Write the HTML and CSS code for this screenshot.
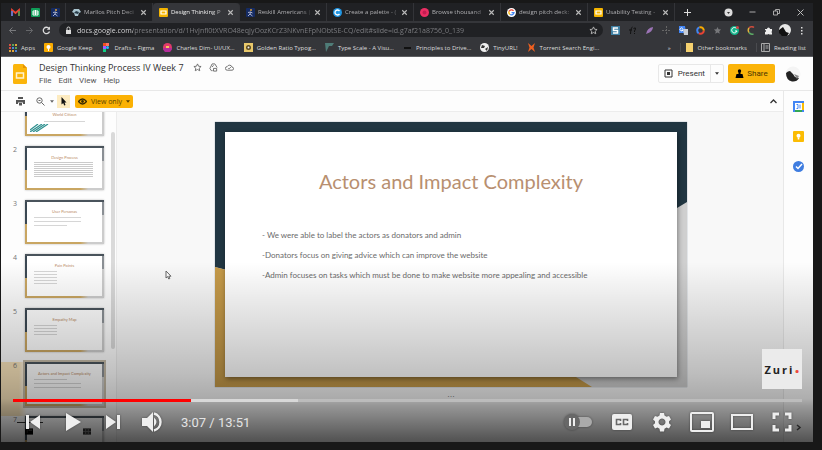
FILE: index.html
```html
<!DOCTYPE html>
<html lang="en">
<head>
<meta charset="utf-8">
<meta name="viewport" content="width=device-width, initial-scale=1">
<title>Design Thinking Process IV Week 7</title>
<link rel="stylesheet" href="styles.css">
</head>
<body>
<svg class="defs" aria-hidden="true">
  <symbol id="slides" viewBox="0 0 9 9"><rect width="9" height="9" rx="1" fill="#f4b400"/><path d="M2 3h5v3H2z" fill="none" stroke="#fff" stroke-width="1.2"/></symbol>
  <symbol id="figure" viewBox="0 0 9 9"><rect width="9" height="9" rx="1" fill="#152b63"/><circle cx="5" cy="2" r="1" fill="#d9a13a"/><path d="M2 4.500l2.500-.5 2 1M4.500 4L4 6 2 8M4 6l2.500 2" fill="none" stroke="#a9b1cc"/></symbol>
  <symbol id="caret" viewBox="0 0 6 4"><path d="M0 0h6L3 4z" fill="currentColor"/></symbol>
  <symbol id="close" viewBox="0 0 8 8"><path d="M2 2l4 4m0-4l-4 4" stroke="currentColor" fill="none"/></symbol>
  <symbol id="star" viewBox="0 0 10 10"><path d="M5 1l1.200 2.600 2.800.3-2.100 1.900.6 2.800L5 7.200 2.500 8.600l.6-2.800L1 3.900l2.800-.3z" fill="none" stroke="currentColor"/></symbol>
</svg>
<main class="player">
  <section class="screen">
    <nav class="tabs" aria-label="Browser tabs">
      <button class="tab pinned" aria-label="Gmail"><svg viewBox="0 0 9 9"><path d="M1 8V2l3.500 3L8 2v6" fill="none" stroke="#ea4335" stroke-width="1.800"/><path d="M1 3v5" stroke="#4285f4" stroke-width="1.500"/><path d="M8 3v5" stroke="#34a853" stroke-width="1.500"/></svg></button>
      <button class="tab pinned" aria-label="Sheets"><svg viewBox="0 0 9 9"><rect width="9" height="9" rx="1" fill="#0f9d58"/><path d="M2 3h5v4H2zM4.500 2v5M2 5h5" fill="none" stroke="#fff"/></svg></button>
      <button class="tab pinned" aria-label="Course"><svg><use href="#figure"/></svg></button>
      <button class="tab"><svg viewBox="0 0 9 9"><path d="M0 4L2 1h5l2 3-2 1-1 3H3L2 5z" fill="#a9c4cf"/><path d="M2 5l2-2 3 1-1 2z" fill="#263a48"/></svg><span>Marllos Pitch Deci</span><svg><use href="#close"/></svg></button>
      <button class="tab active"><svg><use href="#slides"/></svg><span>Design Thinking P</span><svg><use href="#close"/></svg></button>
      <button class="tab"><svg><use href="#figure"/></svg><span>Reskill Americans |</span><svg><use href="#close"/></svg></button>
      <button class="tab"><svg viewBox="0 0 9 9"><circle cx="4.500" cy="4.500" r="4.500" fill="#2196e3"/><path d="M6.500 3a2.500 2.500 0 1 0 0 3" fill="none" stroke="#fff" stroke-width="1.300"/></svg><span>Create a palette - (</span><svg><use href="#close"/></svg></button>
      <button class="tab"><svg viewBox="0 0 9 9"><circle cx="4.500" cy="4.500" r="4.500" fill="#ea2e63"/><circle cx="4.500" cy="4.500" r="2" fill="#c31c50"/></svg><span>Browse thousand</span><svg><use href="#close"/></svg></button>
      <button class="tab"><svg viewBox="0 0 9 9"><circle cx="4.500" cy="4.500" r="4.500" fill="#fff"/><path d="M2 3.500A2.600 2.600 0 0 1 6.500 2.800" stroke="#ea4335" stroke-width="1.300" fill="none"/><path d="M2 3.500a2.800 2.800 0 0 0 1 3" stroke="#fbbc04" stroke-width="1.300" fill="none"/><path d="M3 6.500a2.700 2.700 0 0 0 4-1.800H4.500" stroke="#4285f4" stroke-width="1.300" fill="none"/></svg><span>design pitch deck:</span><svg><use href="#close"/></svg></button>
      <button class="tab"><svg><use href="#slides"/></svg><span>Usability Testing -</span><svg><use href="#close"/></svg></button>
      <button class="new-tab" aria-label="New tab"><svg viewBox="0 0 9 9"><path d="M4.500 1v7M1 4.500h7" stroke="#ddd"/></svg></button>
      <div class="window-buttons">
        <button aria-label="Search tabs"><svg viewBox="0 0 9 9"><circle cx="4.500" cy="4.500" r="4" fill="#ddd"/><path d="M3 4h3L4.500 6z" fill="#333"/></svg></button>
        <button aria-label="Minimize"><svg viewBox="0 0 9 9"><path d="M1.500 4h6" stroke="#aaa"/></svg></button>
        <button aria-label="Restore"><svg viewBox="0 0 9 9"><path d="M1.500 3h4v4h-4zM3.500 3V1.500h4v4h-2" fill="none" stroke="#aaa"/></svg></button>
        <button aria-label="Close"><svg viewBox="0 0 9 9"><path d="M1.500 1.500l6 6m0-6l-6 6" stroke="#bbb"/></svg></button>
      </div>
    </nav>
    <div class="address">
      <button aria-label="Back"><svg viewBox="0 0 9 9"><path d="M8 4.500H1.500M4.500 1.500l-3 3 3 3" fill="none" stroke="#77787b"/></svg></button>
      <button aria-label="Forward"><svg viewBox="0 0 9 9"><path d="M1 4.500h6.500M4.500 1.500l3 3-3 3" fill="none" stroke="#66676a"/></svg></button>
      <button aria-label="Reload"><svg viewBox="0 0 9 9"><path d="M7.500 5.500A3.200 3.200 0 1 1 7 2.500" fill="none" stroke="#ddd" stroke-width="1.300"/><path d="M8 .5v3.300H4.800z" fill="#ddd"/></svg></button>
      <label class="omnibox">
        <svg viewBox="0 0 9 9"><path d="M2 4h5v4H2z" fill="#ddd"/><path d="M3 4V2.500a1.500 1.500 0 0 1 3 0V4" fill="none" stroke="#ddd"/></svg>
        <input type="text" aria-label="Address" value="docs.google.com/presentation/d/1HvJnfl0tXVRO48eqJyOozKCrZ3NKvnEFpNObtSE-CQ/edit#slide=id.g7af21a8756_0_139">
        <svg class="pale"><use href="#star"/></svg>
      </label>
      <div class="extensions">
        <svg viewBox="0 0 9 9"><rect width="9" height="9" fill="#3e7fa3"/><path d="M7 2H2.500v2.500h4V7H2" fill="none" stroke="#fff" stroke-width="1.500"/></svg>
        <svg viewBox="0 0 9 9"><path d="M4.500 1Q3 1 2.500 8M1 4h3M5.500 2.500Q8 1 7.500 3L6.500 5v1m0 1v1" stroke="#111" fill="none"/></svg>
        <svg viewBox="0 0 9 9"><path d="M1 8Q2 2 8 1 8 6 1 8z" fill="#9b73b5"/></svg>
        <svg viewBox="0 0 9 9"><path d="M4.500 0v9M0 4.500h9" stroke="#666" stroke-dasharray="2 1"/></svg>
        <svg viewBox="0 0 9 9"><path d="M0 0h6l1 7H0z" fill="#4285f4"/><path d="M4 3h5v6H5z" fill="#c9cdd5"/><path d="M3.800 2.500a1.500 1.500 0 1 0 .2 1.500H2.700" fill="none" stroke="#fff"/></svg>
        <svg viewBox="0 0 9 9"><circle cx="4.500" cy="4.500" r="3.300" fill="none" stroke="#ea4335" stroke-width="2" stroke-dasharray="7 14"/><circle cx="4.500" cy="4.500" r="3.300" fill="none" stroke="#4285f4" stroke-width="2" stroke-dasharray="7 14" stroke-dashoffset="-7"/><circle cx="4.500" cy="4.500" r="3.300" fill="none" stroke="#f9ab00" stroke-width="2" stroke-dasharray="7 14" stroke-dashoffset="-14"/></svg>
        <svg viewBox="0 0 10 10"><path d="M5 1l1.200 2.600 2.800.3-2.100 1.900.6 2.800L5 7.200 2.500 8.600l.6-2.800L1 3.900l2.800-.3z" fill="#77787b"/></svg>
        <svg viewBox="0 0 9 9"><circle cx="4.500" cy="4.500" r="4.500" fill="#12b58b"/><path d="M6.500 2.500A2.700 2.700 0 1 0 7 5H5" stroke="#fff" fill="none"/><circle cx="7.500" cy="1.500" r="1.500" fill="#c44"/></svg>
        <svg viewBox="0 0 9 9"><path d="M7 1.500A3.500 3.500 0 0 0 2 2" stroke="#cb4b3c" fill="none" stroke-width="1.500"/><path d="M2 2a4 4 0 0 0 0 4.500" stroke="#e0b23c" fill="none" stroke-width="1.500"/><path d="M2 6.500A4 4 0 0 0 6.500 8" stroke="#5caa65" fill="none" stroke-width="1.500"/></svg>
        <svg viewBox="0 0 9 9"><path d="M1 3h2a1.400 1.400 0 1 1 3 0h2v2a1.400 1.400 0 0 0 0 2v1.500H5.500a1.300 1.300 0 0 0-2 0H1V6a1 1 0 0 0 0-2z" fill="#eee"/></svg>
        <svg class="face" viewBox="0 0 12 12"><circle cx="6" cy="6" r="6" fill="#e8e8e8"/><path d="M0 6l4-3 3 5 3 1-2 3H3L0 9z" fill="#111"/></svg>
        <svg viewBox="0 0 9 9"><path d="M4 1h1.500v1.500H4zM4 4h1.500v1.500H4zM4 7h1.500v1.500H4z" fill="#ddd"/></svg>
      </div>
    </div>
    <nav class="bookmarks" aria-label="Bookmarks">
      <a href="#"><svg viewBox="0 0 9 9"><path d="M1 1h2v2H1zM1 4h2v2H1z" fill="#d95140"/><path d="M4 1h2v2H4zM7 4h2v2H7z" fill="#58a55c"/><path d="M7 1h2v2H7zM1 7h2v2H1zM4 7h2v2H4z" fill="#e0a63a"/><path d="M4 4h2v2H4zM7 7h2v2H7z" fill="#4b83d8"/></svg>Apps</a>
      <a href="#"><svg viewBox="0 0 9 9"><rect width="9" height="9" rx="1" fill="#f9ab00"/><circle cx="4.500" cy="4" r="2" fill="#fff"/><path d="M4 6h1v2H4z" fill="#fff"/></svg>Google Keep</a>
      <a href="#"><svg viewBox="0 0 9 9"><path d="M2 0h3v3H2z" fill="#f24e1e"/><path d="M5 0h3v3H5z" fill="#ff7262"/><path d="M2 3h3v3H2z" fill="#a259ff"/><circle cx="6.500" cy="4.500" r="1.500" fill="#1abcfe"/><path d="M2 6h3v3H2z" fill="#0acf83"/></svg>Drafts – Figma</a>
      <a href="#"><svg viewBox="0 0 9 9"><circle cx="4.500" cy="4.500" r="4.500" fill="#e23a6a"/><path d="M0 5h9a4.500 4.500 0 0 1-9 0z" fill="#b52c9b"/><path d="M3 3h3v2H3z" fill="#f3c65c"/></svg>Charles Dim- UI/UX...</a>
      <a href="#"><svg viewBox="0 0 9 9"><path d="M0 0h9v9H0z" fill="#e8c86b"/><circle cx="4.500" cy="4.500" r="2.500" fill="#5b4a20"/><circle cx="4.500" cy="4.500" r="1" fill="#eee"/></svg>Golden Ratio Typog...</a>
      <a href="#"><svg viewBox="0 0 9 9"><path d="M0 0h9L7 3H4L1 9z" fill="#4f7c78"/></svg>Type Scale - A Visu...</a>
      <a href="#"><svg viewBox="0 0 9 9"><path d="M1 4h7v2H1z" fill="#111"/></svg>Principles to Drive...</a>
      <a href="#"><svg viewBox="0 0 9 9"><circle cx="4.500" cy="4.500" r="4.500" fill="#eee"/><path d="M2 2l3 1-1 2-3 0zM5 6l3-2-1 4z" fill="#333"/></svg>TinyURL!</a>
      <a href="#"><svg viewBox="0 0 9 9"><path d="M1 0l3.500 3L8 0 6.500 4.500 8 9 4.500 6 1 9l1.500-4.500z" fill="#ef6020"/></svg>Torrent Search Engi...</a>
      <button class="more" aria-label="More bookmarks">»</button>
      <a class="divided" href="#"><svg viewBox="0 0 9 9"><path d="M1 0h7v9H1z" fill="#f4d06f"/></svg>Other bookmarks</a>
      <a class="divided" href="#"><svg viewBox="0 0 9 9"><path d="M.5.5h8v8h-8zM3 1v7M4.500 3h3M4.500 5h3" fill="none" stroke="#aaa"/></svg>Reading list</a>
    </nav>
    <header class="doc-header">
      <svg class="doc-logo" viewBox="0 0 14 20"><path d="M1.500 0H10l4 4v14.500q0 1.500-1.500 1.500h-11Q0 20 0 18.500v-17Q0 0 1.500 0z" fill="#fbb50b"/><path d="M10 0l4 4h-4z" fill="#e69500"/><path d="M3.500 9h7v5h-7z" fill="none" stroke="#fff3cf" stroke-width="1.500"/></svg>
      <div class="doc-names">
        <div class="title-row"><h1>Design Thinking Process IV Week 7</h1>
          <svg><use href="#star"/></svg>
          <svg viewBox="0 0 10 10"><path d="M3.500 1h3L9 5M3.500 1L1 6l1.500 2.500H4M3.500 4.500l1.500-2M5 6h3.500v3H5z" fill="none" stroke="currentColor"/></svg>
          <svg viewBox="0 0 10 10"><path d="M2.500 8h5.300a1.700 1.700 0 0 0 0-3.400A2.900 2.900 0 0 0 2.400 4 2 2 0 0 0 2.500 8zM3.500 5.500l1 1 2-2" fill="none" stroke="currentColor"/></svg>
        </div>
        <nav class="menu"><button>File</button><button>Edit</button><button>View</button><button>Help</button></nav>
      </div>
      <div class="present"><button><svg viewBox="0 0 9 9"><path d="M1 1h7v7H1z" fill="none" stroke="#333"/><path d="M3 3h3v3H3z" fill="#333"/></svg>Present</button><button class="drop" aria-label="Present options"><svg><use href="#caret"/></svg></button></div>
      <button class="share"><svg viewBox="0 0 8 9"><circle cx="4" cy="2" r="1.700"/><path d="M3 3h2v2h2l1 4H0l1-4h2z"/></svg>Share</button>
      <svg class="avatar" viewBox="0 0 16 16"><circle cx="8" cy="8" r="7.500" fill="#f4f4f4"/><path d="M1 7q2-2 4-2l3 3 2 3 4 1q-2 4-7 3.500Q1 14 1 7z" fill="#222"/><path d="M9 8l5 2-2 3z" fill="#888"/></svg>
    </header>
    <div class="body">
      <div class="editor">
        <div class="toolbar">
          <button aria-label="Print"><svg viewBox="0 0 9 9"><path d="M2 0h5v2H2zM0 3h9v4H7V5.500H2V7H0zM3 6h3v2.500H3z" fill="#555"/></svg></button>
          <button class="zoom" aria-label="Zoom"><svg viewBox="0 0 9 9"><circle cx="3.500" cy="3.500" r="2.700" fill="none" stroke="#666"/><path d="M2.500 3.500h2M5.500 5.500L8.500 8.500" stroke="#666"/></svg><svg class="arrow"><use href="#caret"/></svg></button>
          <button class="select" aria-label="Select"><svg viewBox="0 0 9 9"><path d="M2.500 0v7.500L4.200 6l1 2.500 1.300-.6-1-2.400h2z" fill="#111"/></svg></button>
          <button class="view-only"><svg viewBox="0 0 9 9"><path d="M.5 4.500Q4.500-.5 8.500 4.500 4.500 9.500.5 4.500z" fill="none" stroke="#3c2d00" stroke-width="1.300"/><circle cx="4.500" cy="4.500" r="1.400" fill="#3c2d00"/></svg>View only<svg class="arrow"><use href="#caret"/></svg></button>
          <button class="collapse" aria-label="Hide menus"><svg viewBox="0 0 9 9"><path d="M1.500 6l3-3 3 3" fill="none" stroke="#333" stroke-width="1.300"/></svg></button>
        </div>
        <div class="workspace">
          <aside class="filmstrip">
            <ol>
              <li><span></span><div class="thumb cover"><b>World Citizen</b><i></i><svg viewBox="0 0 20 8"><path d="M0 8L12 0M3 8L15 0M6 8L18 0M0 6L8 0" stroke="#2d8f8e" stroke-width="1.200"/></svg></div></li>
              <li><span>2</span><div class="thumb dense"><b>Design Process</b><i></i><i></i><i></i><i></i><i></i><i></i><i></i><i></i></div></li>
              <li><span>3</span><div class="thumb"><b>User Personas</b><i></i><i></i><i class="short"></i></div></li>
              <li><span>4</span><div class="thumb brief"><b>Pain Points</b><i></i><i></i><i></i><i></i><i></i></div></li>
              <li><span>5</span><div class="thumb brief"><b>Empathy Map</b><i></i><i></i><i></i><i></i></div></li>
              <li class="current"><span>6</span><div class="thumb"><b>Actors and Impact Complexity</b><i class="short"></i><i></i><i></i></div></li>
              <li><span>7</span><div class="thumb"></div></li>
            </ol>
            <div class="view-switch"><svg viewBox="0 0 9 7"><path d="M0 0h9v7H0z"/><path d="M2 2h1M4 2h4M2 4h1" stroke="#666"/></svg><svg viewBox="0 0 9 7"><path d="M0 0h9v7H0z" fill="#333"/><path d="M3 0v7M6 0v7M0 3.500h9" stroke="#777"/></svg></div>
          </aside>
          <div class="canvas">
            <article class="slide">
              <svg class="frame" viewBox="0 0 472 265" preserveAspectRatio="none"><path d="M0 0h472v265H0z" fill="#cfcfcf"/><path d="M0 0h472v80l-40 24H20v46L0 145z" fill="#213642"/><path d="M0 145l30 8v92h315l32 20H0z" fill="#c59a49"/></svg>
              <div class="paper"><h2>Actors and Impact Complexity</h2><p>- We were able to label the actors as donators and admin</p><p>-Donators focus on giving advice which can improve the website</p><p>-Admin focuses on tasks which must be done to make website more appealing and accessible</p></div>
            </article>
            <div class="notes-grip">• • •</div>
            <svg class="pointer" viewBox="0 0 7 10"><path d="M1 1v7l1.600-1.400L3.800 9l1-.5-1-2.300H6z" fill="#fff" stroke="#666"/></svg>
          </div>
        </div>
      </div>
      <aside class="side-panel">
        <button aria-label="Calendar"><svg viewBox="0 0 11 11"><path d="M0 0h11v11H0z" fill="#4285f4"/><path d="M9 2h2v7H9z" fill="#fbbc04"/><path d="M2 9h7v2H2z" fill="#34a853"/><path d="M2 2h7v7H2z" fill="#fff"/><path d="M3.500 3.500H5v4H3.500M7 3.500v4" stroke="#4285f4" fill="none"/></svg></button>
        <button aria-label="Keep"><svg viewBox="0 0 11 11"><rect width="11" height="11" rx="1" fill="#fbbc04"/><circle cx="5.500" cy="4.800" r="2" fill="#fff"/><path d="M4.700 6.500h1.600v2H4.700z" fill="#fff"/></svg></button>
        <button aria-label="Tasks"><svg viewBox="0 0 11 11"><circle cx="5.500" cy="5.500" r="5.500" fill="#3f7de0"/><path d="M3 5.500l2 2L9 3" fill="none" stroke="#fff" stroke-width="1.500"/></svg></button>
        <button class="expand" aria-label="Hide side panel"><svg viewBox="0 0 9 9"><path d="M3 2l3 2.500L3 7" fill="none" stroke="#555" stroke-width="1.500"/></svg></button>
      </aside>
    </div>
  </section>
  <div class="shade"></div>
  <div class="overlay">
    <a class="watermark" href="#">Zuri<span>.</span></a>
    <input class="seek" type="range" min="0" max="831" value="187" aria-label="Seek">
    <div class="controls">
      <button aria-label="Previous"><svg viewBox="0 0 24 24"><path d="M5 5h3v14H5zM19 5v14L9 12z"/></svg></button>
      <button aria-label="Play"><svg viewBox="0 0 24 24"><path d="M5 3l15 9-15 9z"/></svg></button>
      <button aria-label="Next"><svg viewBox="0 0 24 24"><path d="M5 5v14l10-7zM16 5h3v14h-3z"/></svg></button>
      <button aria-label="Mute"><svg viewBox="0 0 24 24"><path d="M1 8h5l6-6v20l-6-6H1zM13 7.500q5 4.500 0 9z"/><path d="M13 3.500a8.800 8.800 0 0 1 0 17" fill="none" stroke="#eee" stroke-width="2.400"/></svg></button>
      <time>3:07 / 13:51</time>
      <button class="auto" aria-label="Autoplay"><svg class="wide" viewBox="0 0 30 18"><rect x="6" y="4" width="22" height="10" rx="5" fill="#aaa"/><circle cx="8" cy="9" r="8" fill="#686868"/><path d="M5 5h2v8H5zM9 5h2v8H9z"/></svg></button>
      <button aria-label="Captions"><svg viewBox="0 0 24 24"><rect x="2" y="4" width="20" height="16" rx="2"/><path d="M10.500 11V9.500h-4v5h4V13M17.500 11V9.500h-4v5h4V13" fill="none" stroke="#686868" stroke-width="1.600"/></svg></button>
      <button aria-label="Settings"><svg viewBox="0 0 24 24"><path fill-rule="evenodd" d="M10 3h4l.5 2.500 2 1.200L19 6l2 3.500-2 1.700v2l2 1.700-2 3.500-2.500-.8-2 1.200L14 21.500h-4l-.5-2.700-2-1.200-2.500.8L3 15l2-1.800v-2L3 9.500 5 6l2.500.7 2-1.200zM12 8.500a3.500 3.500 0 1 0 .01 0z"/></svg></button>
      <button aria-label="Miniplayer"><svg viewBox="0 0 24 24"><rect x="1" y="3" width="22" height="18" rx="1" fill="none" stroke="#eee" stroke-width="2"/><path d="M11 11h9v7h-9z"/></svg></button>
      <button aria-label="Theater mode"><svg viewBox="0 0 24 24"><path d="M2 5h20v14H2z" fill="none" stroke="#eee" stroke-width="2"/></svg></button>
      <button aria-label="Full screen"><svg viewBox="0 0 24 24"><path d="M4 9V4h5M15 4h5v5M20 15v5h-5M9 20H4v-5" fill="none" stroke="#eee" stroke-width="3"/></svg></button>
    </div>
  </div>
</main>
</body>
</html>
```
FILE: styles.css
```css
* { box-sizing: border-box; }
body { margin: 0; height: 100vh; padding: 3px 9px 8px 1px; background: #181818; font-family: "Open Sans", "Noto Sans", sans-serif; font-size: 7px; }
button { border: 0; padding: 0; margin: 0; background: none; font: inherit; color: inherit; display: flex; align-items: center; justify-content: center; }
a { color: inherit; text-decoration: none; }
svg { width: 9px; height: 9px; flex: none; display: block; }
.defs { position: absolute; width: 0; height: 0; }
.player { position: relative; height: 100%; overflow: hidden; }
.screen { height: 100%; display: flex; flex-direction: column; background: #fdfdfd; }

/* Browser chrome */
.tabs { display: flex; height: 18px; background: #202124; color: #b0b0b3; flex: none; padding-left: 5px; font-size: 6px; }
.tab { flex: 0 1 87px; min-width: 0; padding: 0 4px 0 6px; gap: 3px; border-right: 1px solid #333438; }
.tab span { flex: 1; min-width: 0; white-space: nowrap; text-align: left; mask-image: linear-gradient(90deg, #000 75%, #0006); }
.tab.pinned { flex-basis: 20px; padding: 0; }
.tab.active { background: #35363a; color: #f0f0f0; border-radius: 4px 4px 0 0; }
.tab svg:last-child:not(:first-child) { color: #bbb; }
.new-tab { width: 24px; }
.window-buttons { margin-left: auto; display: flex; gap: 15px; padding-right: 8px; }
.address { display: flex; align-items: center; height: 18px; background: #35363a; flex: none; padding: 0 7px; gap: 8px; }
.omnibox { flex: 1; display: flex; align-items: center; height: 14px; border-radius: 7px; background: #202124; padding: 0 5px; gap: 4px; }
.omnibox input { flex: 1; min-width: 0; border: 0; padding: 0; outline: 0; font: inherit; color: transparent; background: linear-gradient(90deg, #e4e4e6 56px, #808185 56px) text; }
.pale { color: #bbb; }
.extensions { display: flex; align-items: center; gap: 8px; }
.extensions .face { width: 12px; height: 12px; margin: 0 -2px; }
.bookmarks { display: flex; align-items: center; height: 18px; background: #35363a; color: #dededf; flex: none; padding: 0 7px; gap: 9px; border-bottom: 1px solid #5d5e61; white-space: nowrap; font-size: 6px; }
.bookmarks a { display: flex; align-items: center; gap: 4px; }
.more { margin-left: auto; }
.bookmarks .divided { border-left: 1px solid #4a4b4f; padding-left: 4px; }

/* Document header */
.doc-header { display: flex; align-items: center; height: 34px; padding: 0 12px; flex: none; border-bottom: 1px solid #e8e8e8; color: #333; font-family: Roboto, sans-serif; }
.doc-logo { width: 14px; height: 20px; margin-right: 12px; }
.doc-names { flex: 1; }
.title-row { display: flex; align-items: center; gap: 7px; height: 14px; color: #666; }
h1 { margin: 0 2px 0 0; color: #333; font: 9px/14px "Open Sans", sans-serif; }
.menu { display: flex; gap: 7px; height: 12px; font-size: 8px; color: #555; }
.present { display: flex; height: 19px; border: 1px solid #e8e8e8; border-radius: 2px; font-size: 8px; margin-right: 4px; }
.present button { padding: 0 5px; gap: 5px; }
.present .drop { border-left: 1px solid #e8e8e8; padding: 0 4px; }
.drop svg, .arrow { width: 4px; height: 3px; }
.share { height: 19px; width: 47px; gap: 3px; background: #fbb40a; border-radius: 2px; font-size: 8px; color: #4a3600; }
.avatar { width: 16px; height: 16px; margin-left: 10px; }

/* Editor */
.body { flex: 1; min-height: 0; display: flex; }
.editor { flex: 1; min-width: 0; display: flex; flex-direction: column; }
.toolbar { height: 21px; flex: none; display: flex; align-items: center; padding: 0 5px 0 15px; border-bottom: 1px solid #ececec; }
.zoom { margin-left: 11px; gap: 5px; color: #666; }
.select { width: 13px; height: 13px; background: #fdebc0; margin: 0 5px 0 3px; }
.view-only { height: 13px; width: 58px; gap: 4px; background: #fbb104; border-radius: 2px; color: #5a4200; }
.collapse { margin-left: auto; }
.workspace { flex: 1; min-height: 0; display: flex; }
.filmstrip { position: relative; width: 116px; flex: none; overflow: hidden; border-right: 1px solid #ececec; }
.filmstrip::after { content: ""; position: absolute; right: 1px; top: 20px; width: 4px; height: 217px; border-radius: 2px; background: #dadada; }
.filmstrip ol { list-style: none; margin: -20px 0 0; padding: 0; }
.filmstrip li { display: flex; padding: 0 0 10px 12px; }
.filmstrip li > span { width: 12px; color: #777; line-height: 8px; }
.filmstrip .current { background: linear-gradient(90deg, #fbe6bd 18px, transparent 26px); }
.thumb {
  width: 79px; height: 44px; padding: 7px; border: 2px solid transparent; box-shadow: 0 0 2px #bbb;
  background:
    linear-gradient(#fff, #fff) padding-box,
    linear-gradient(#4a545c, #4a545c) left top / 100% 2px no-repeat border-box,
    linear-gradient(#3b4853, #3b4853) left top / 2px 55% no-repeat border-box,
    linear-gradient(#8a8f94, #8a8f94) right top / 2px 34% no-repeat border-box,
    linear-gradient(#c9a662, #c9a662) left bottom / 2px 45% no-repeat border-box,
    linear-gradient(90deg, #c9a662 70%, #ccc 80%) border-box;
}
.thumb b { display: block; font: 4px/5px Lato, sans-serif; color: #b98a63; text-align: center; margin-bottom: 3px; }
.thumb i { display: block; height: 1px; background: #d6d6d6; margin: 0 14px 3px 0; }
.thumb .short { margin-right: 28px; }
.brief i { margin-right: 38px; margin-bottom: 2px; }
.dense b { margin-bottom: 2px; }
.dense i { margin: 0 2px 1px 0; background: #cbcbcb; }
.cover { padding-top: 18px; }
.cover b { margin-bottom: 4px; }
.cover i { margin: 0 10px 2px; }
.cover svg { width: 20px; height: 8px; margin-left: -4px; }
.current .thumb { outline: 2px solid #c5bba8; }
.view-switch { position: absolute; left: 24px; bottom: 7px; display: flex; gap: 50px; }
.view-switch::before { content: ""; position: absolute; left: -8px; top: -6px; width: 26px; height: 1px; background: #333; }
.view-switch svg { width: 8px; height: 7px; }
.canvas { position: relative; flex: 1; min-width: 0; background: #f8f8f8; padding: 10px 96px 0 98px; }
.slide { position: relative; aspect-ratio: 472 / 265; padding: 10px; box-shadow: 0 0 1px #789; }
.frame { position: absolute; inset: 0; width: 100%; height: 100%; }
.paper { position: relative; height: 100%; background: #fff; padding: 35px 37px; color: #6a6a6a; box-shadow: 1px 2px 5px #0006; }
h2 { margin: 0 0 34px; font: 20px/28px Lato, sans-serif; color: #b88f70; text-align: center; white-space: nowrap; }
.paper p { margin: 0 0 8px; font: 8px/12px Lato, sans-serif; }
.notes-grip { text-align: center; line-height: 20px; font-size: 4px; color: #777; }
.pointer { position: absolute; left: 48px; top: 158px; width: 7px; height: 10px; }
.side-panel { width: 30px; border-left: 1px solid #e8e8e8; display: flex; flex-direction: column; align-items: center; gap: 19px; padding: 10px 0; }
.side-panel svg { width: 11px; height: 11px; }
.side-panel .expand { margin-top: auto; }
.side-panel .expand svg { width: 9px; height: 9px; }

/* Player controls */
.shade { position: absolute; inset: auto 0 0; height: 180px; background: linear-gradient(transparent, #00000014 20%, #00000029 42%, #0000003d 62%, #00000050 76%, #00000065 80%, #000000ac); }
.overlay { position: absolute; inset: auto 0 0; padding: 0 11px 0 12px; display: flex; flex-direction: column; }
.watermark { align-self: flex-end; width: 40px; height: 40px; background: #ebebeb; color: #222; display: flex; align-items: center; justify-content: center; font: bold 11px "Open Sans", sans-serif; letter-spacing: 2px; }
.watermark span { color: #ed4a3c; font-size: 18px; line-height: 11px; padding-bottom: 5px; letter-spacing: 0; }
.seek { appearance: none; display: block; width: 100%; height: 3px; margin: 10px 0 0; background: linear-gradient(90deg, #f00 178px, #d8d8d8 178px 285px, #bcbcbc 285px); }
.seek::-webkit-slider-thumb { appearance: none; width: 0; height: 0; }
.controls { display: flex; align-items: center; height: 40px; padding: 0 8px; gap: 16px; }
.controls svg { width: 24px; height: 24px; fill: #eee; filter: drop-shadow(0 0 1px #0006); }
.controls .wide { width: 30px; height: 18px; }
.controls time { font: 13px Roboto, sans-serif; color: #e4e4e4; }
.auto { margin-left: auto; }
```
